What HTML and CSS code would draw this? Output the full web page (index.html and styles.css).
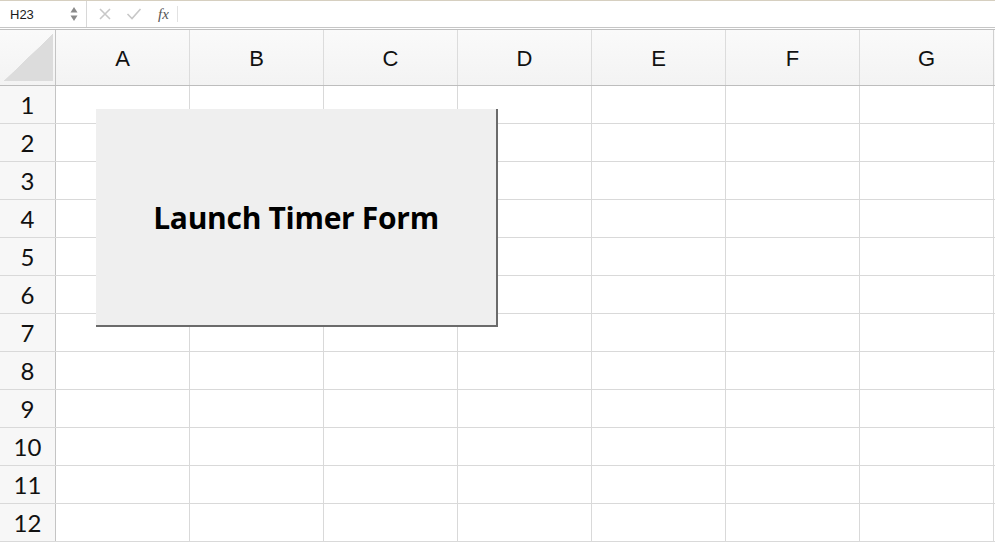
FILE: index.html
```html
<!DOCTYPE html>
<html>
<head>
<meta charset="utf-8">
<link rel="stylesheet" href="styles.css">
</head>
<body>
<div class="formula-bar">
  <div class="name-box">
    <span class="name">H23</span>
    <span class="spin">
      <svg width="8" height="16" viewBox="0 0 8 16"><path d="M4 1 L7.5 6.5 L0.5 6.5 Z" fill="#8a8a8a"/><path d="M4 15 L7.5 9.5 L0.5 9.5 Z" fill="#8a8a8a"/></svg>
    </span>
  </div>
  <div class="fx-tools">
    <svg class="ico" width="14" height="14" viewBox="0 0 14 14"><path d="M2 2 L12 12 M12 2 L2 12" stroke="#c8c8c8" stroke-width="1.6" fill="none"/></svg>
    <svg class="ico" width="16" height="14" viewBox="0 0 16 14"><path d="M1.5 7 L6 11.5 L14.5 2" stroke="#c8c8c8" stroke-width="1.6" fill="none"/></svg>
    <span class="fx">fx</span>
    <span class="sep"></span>
  </div>
  <div class="formula-input"></div>
</div>
<div class="sheet">
  <div class="grid">
    <div class="corner"><div class="tri"></div></div>
    <div class="colh">A</div><div class="colh">B</div><div class="colh">C</div><div class="colh">D</div><div class="colh">E</div><div class="colh">F</div><div class="colh last">G</div>
  </div>
  <div class="rows" id="rows">
    <div class="row"><div class="rowh">1</div><div class="c"></div><div class="c"></div><div class="c"></div><div class="c"></div><div class="c"></div><div class="c"></div><div class="c"></div></div>
    <div class="row"><div class="rowh">2</div><div class="c"></div><div class="c"></div><div class="c"></div><div class="c"></div><div class="c"></div><div class="c"></div><div class="c"></div></div>
    <div class="row"><div class="rowh">3</div><div class="c"></div><div class="c"></div><div class="c"></div><div class="c"></div><div class="c"></div><div class="c"></div><div class="c"></div></div>
    <div class="row"><div class="rowh">4</div><div class="c"></div><div class="c"></div><div class="c"></div><div class="c"></div><div class="c"></div><div class="c"></div><div class="c"></div></div>
    <div class="row"><div class="rowh">5</div><div class="c"></div><div class="c"></div><div class="c"></div><div class="c"></div><div class="c"></div><div class="c"></div><div class="c"></div></div>
    <div class="row"><div class="rowh">6</div><div class="c"></div><div class="c"></div><div class="c"></div><div class="c"></div><div class="c"></div><div class="c"></div><div class="c"></div></div>
    <div class="row"><div class="rowh">7</div><div class="c"></div><div class="c"></div><div class="c"></div><div class="c"></div><div class="c"></div><div class="c"></div><div class="c"></div></div>
    <div class="row"><div class="rowh">8</div><div class="c"></div><div class="c"></div><div class="c"></div><div class="c"></div><div class="c"></div><div class="c"></div><div class="c"></div></div>
    <div class="row"><div class="rowh">9</div><div class="c"></div><div class="c"></div><div class="c"></div><div class="c"></div><div class="c"></div><div class="c"></div><div class="c"></div></div>
    <div class="row"><div class="rowh">10</div><div class="c"></div><div class="c"></div><div class="c"></div><div class="c"></div><div class="c"></div><div class="c"></div><div class="c"></div></div>
    <div class="row"><div class="rowh">11</div><div class="c"></div><div class="c"></div><div class="c"></div><div class="c"></div><div class="c"></div><div class="c"></div><div class="c"></div></div>
    <div class="row"><div class="rowh">12</div><div class="c"></div><div class="c"></div><div class="c"></div><div class="c"></div><div class="c"></div><div class="c"></div><div class="c"></div></div>
    <button class="launch">Launch Timer Form</button>
  </div>
</div>
</body>
</html>
```
FILE: styles.css
```css
* { box-sizing: border-box; }
html, body { margin: 0; padding: 0; background: #fff; overflow: hidden; }
body { width: 995px; height: 543px; font-family: "Liberation Sans", Arial, sans-serif; }

.formula-bar {
  height: 28px;
  display: flex;
  border-top: 1px solid #d6cfc0;
  border-bottom: 1px solid #c6c6c6;
  background: #fff;
}
.name-box {
  width: 87px;
  display: flex;
  align-items: center;
  justify-content: space-between;
  padding: 0 8px 0 10px;
  border-right: 1px solid #d8d8d8;
}
.name { font-size: 13px; color: #1a1a1a; }
.spin { display: flex; align-items: center; }
.fx-tools {
  display: flex;
  align-items: center;
  padding-left: 11px;
  gap: 14px;
}
.ico { display: block; }
.fx {
  font-family: "Liberation Serif", serif;
  font-style: italic;
  font-size: 15px;
  color: #555;
  margin-left: 2px;
}
.sep { width: 1px; height: 16px; background: #e2e2e2; margin-left: -6px; }
.formula-input { flex: 1; }

.sheet { margin-top: 1px; }
.grid {
  display: grid;
  grid-template-columns: 56px repeat(7, 134px) 1px;
  height: 57px;
  border-top: 1px solid #bfbfbf;
  border-bottom: 1px solid #bdbdbd;
  background: linear-gradient(#fafafa, #f3f3f3);
}
.corner {
  border-right: 1px solid #c4c4c4;
  padding: 4px 2px 4px 4px;
}
.tri {
  width: 100%;
  height: 100%;
  background: linear-gradient(to top left, #dcdcdc 50%, transparent 50.5%);
}
.colh {
  border-right: 1px solid #dcdcdc;
  display: flex;
  align-items: center;
  justify-content: center;
  font-size: 22px;
  color: #111;
  padding-top: 2px;
}
.colh.last { border-right: 1px solid #d0d0d0; }

.rows { position: relative; }
.row {
  display: grid;
  grid-template-columns: 56px repeat(7, 134px) 1px;
  height: 38px;
  border-bottom: 1px solid #d9d9d9;
}
.rowh {
  background: #f7f7f7;
  border-right: 1px solid #c4c4c4;
  display: flex;
  align-items: center;
  justify-content: center;
  font-family: Lato, "Open Sans", sans-serif;
  font-size: 24px;
  color: #111;
  padding-top: 0;
}
.c { border-right: 1px solid #d9d9d9; }

.launch {
  position: absolute;
  left: 96px;
  top: 23px;
  width: 402px;
  height: 218px;
  background: #efefef;
  border: none;
  border-right: 2px solid #6b6b6b;
  border-bottom: 2px solid #6b6b6b;
  font-family: "Open Sans", Lato, sans-serif;
  font-weight: bold;
  font-size: 30px;
  letter-spacing: -0.3px;
  color: #000;
  padding: 0;
  margin: 0;
}
```
